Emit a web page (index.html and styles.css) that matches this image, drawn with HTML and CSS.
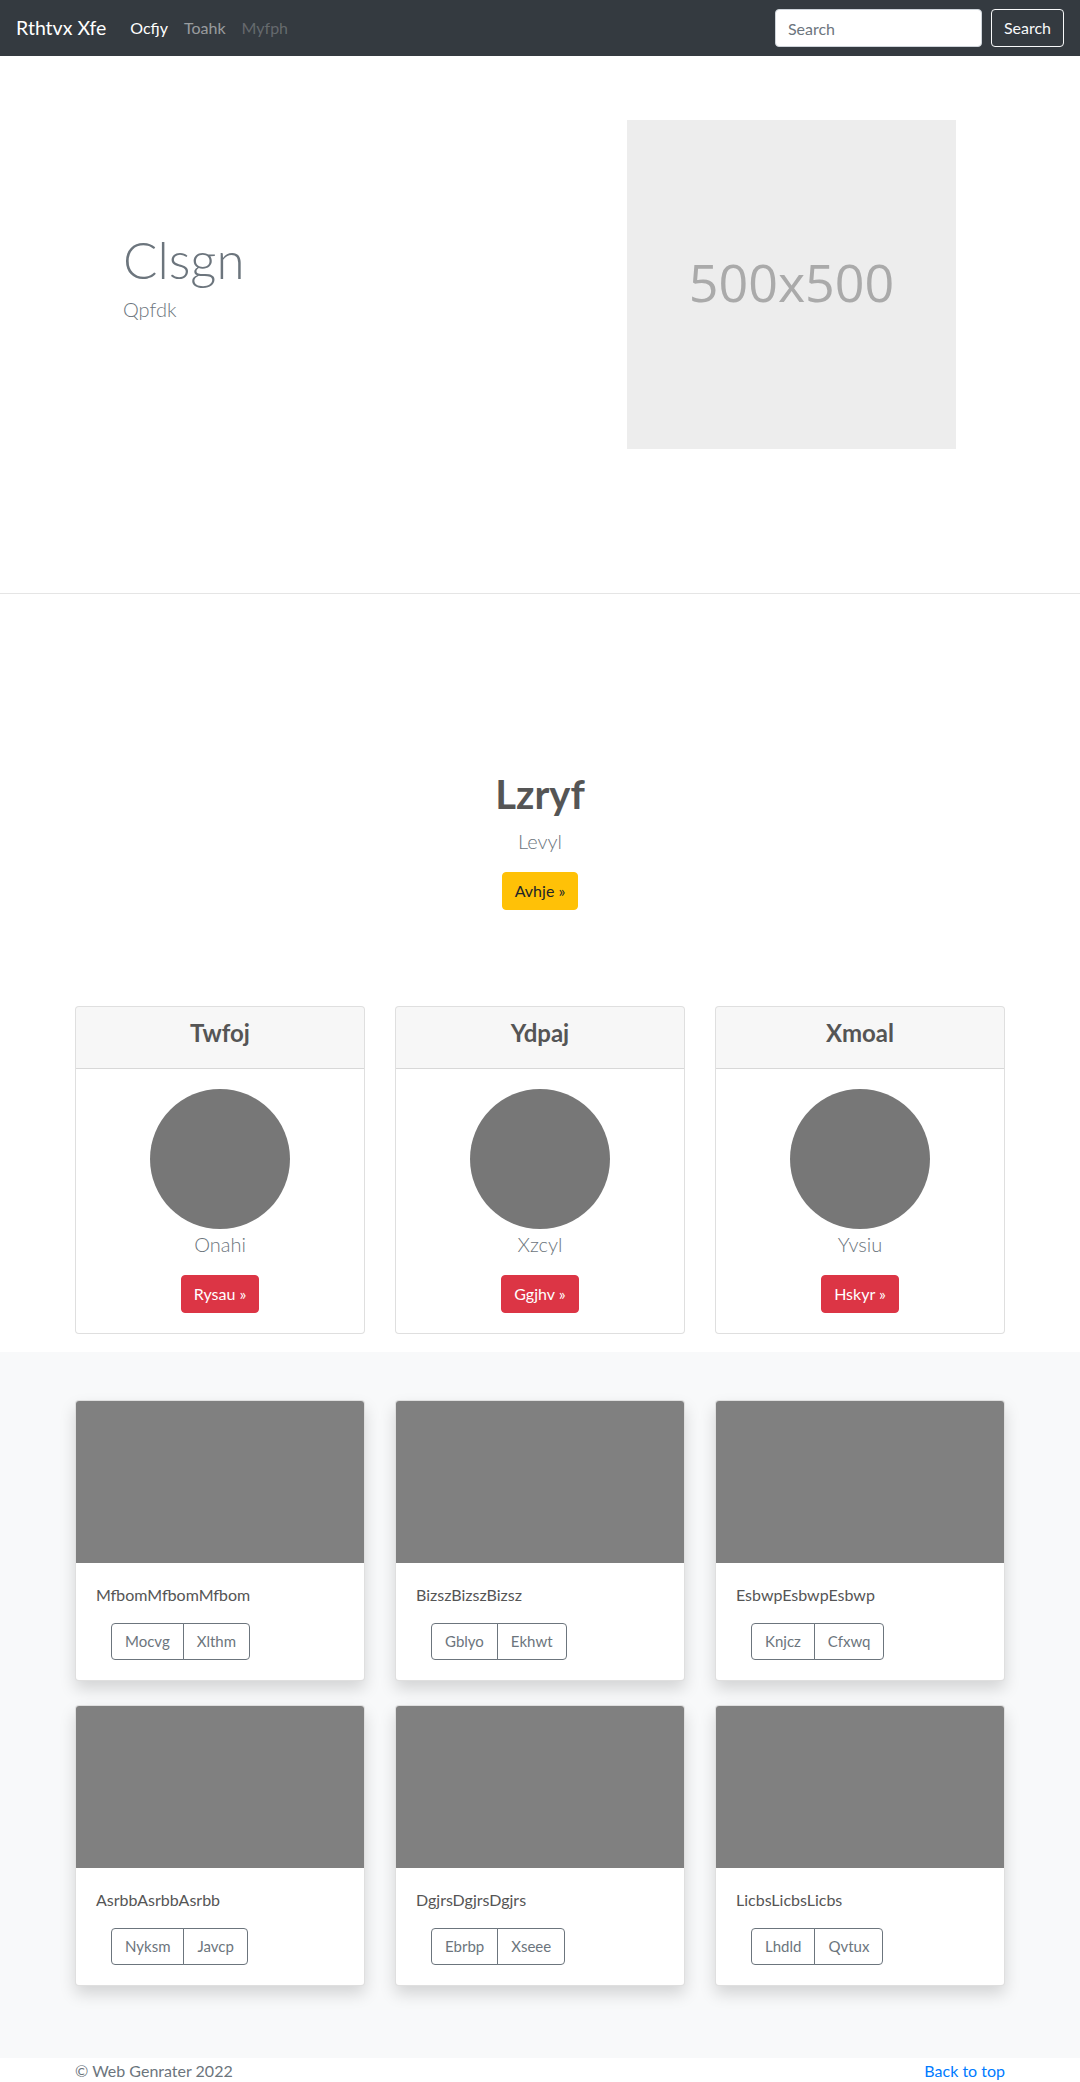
FILE: index.html
```html
<!DOCTYPE html>
<html lang="en">
<head>
<meta charset="utf-8">
<title>Rthtvx Xfe</title>
<link rel="stylesheet" href="styles.css">
</head>
<body>
<nav class="navbar">
  <a class="brand" href="#">Rthtvx Xfe</a>
  <ul class="nav">
    <li><a class="nav-link active" href="#">Ocfjy</a></li>
    <li><a class="nav-link" href="#">Toahk</a></li>
    <li><a class="nav-link disabled" href="#">Myfph</a></li>
  </ul>
  <form class="search">
    <input class="search-input" type="text" placeholder="Search">
    <button class="btn btn-outline-light" type="button">Search</button>
  </form>
</nav>

<section class="hero">
  <div class="container hero-row">
    <div class="hero-text">
      <h1 class="display">Clsgn</h1>
      <p class="lead muted">Qpfdk</p>
    </div>
    <div class="hero-media">
      <div class="placeholder">500x500</div>
    </div>
  </div>
</section>

<section class="feature">
  <div class="container">
    <div class="feature-intro">
      <h1 class="feature-title">Lzryf</h1>
      <p class="lead muted">Levyl</p>
      <a class="btn btn-warning" href="#">Avhje »</a>
    </div>
    <div class="grid-3">
      <div class="card">
        <div class="card-header"><h4>Twfoj</h4></div>
        <div class="card-body center">
          <svg class="avatar" width="140" height="140" viewBox="0 0 140 140"><circle cx="70" cy="70" r="70" fill="#777"/></svg>
          <p class="lead muted">Onahi</p>
          <a class="btn btn-danger" href="#">Rysau »</a>
        </div>
      </div>
      <div class="card">
        <div class="card-header"><h4>Ydpaj</h4></div>
        <div class="card-body center">
          <svg class="avatar" width="140" height="140" viewBox="0 0 140 140"><circle cx="70" cy="70" r="70" fill="#777"/></svg>
          <p class="lead muted">Xzcyl</p>
          <a class="btn btn-danger" href="#">Ggjhv »</a>
        </div>
      </div>
      <div class="card">
        <div class="card-header"><h4>Xmoal</h4></div>
        <div class="card-body center">
          <svg class="avatar" width="140" height="140" viewBox="0 0 140 140"><circle cx="70" cy="70" r="70" fill="#777"/></svg>
          <p class="lead muted">Yvsiu</p>
          <a class="btn btn-danger" href="#">Hskyr »</a>
        </div>
      </div>
    </div>
  </div>
</section>

<section class="album">
  <div class="container grid-3 album-grid">
    <div class="card shadow">
      <div class="thumb"></div>
      <div class="card-body">
        <p class="card-text">MfbomMfbomMfbom</p>
        <div class="btn-group"><a class="btn btn-sm btn-outline-secondary" href="#">Mocvg</a><a class="btn btn-sm btn-outline-secondary" href="#">Xlthm</a></div>
      </div>
    </div>
    <div class="card shadow">
      <div class="thumb"></div>
      <div class="card-body">
        <p class="card-text">BizszBizszBizsz</p>
        <div class="btn-group"><a class="btn btn-sm btn-outline-secondary" href="#">Gblyo</a><a class="btn btn-sm btn-outline-secondary" href="#">Ekhwt</a></div>
      </div>
    </div>
    <div class="card shadow">
      <div class="thumb"></div>
      <div class="card-body">
        <p class="card-text">EsbwpEsbwpEsbwp</p>
        <div class="btn-group"><a class="btn btn-sm btn-outline-secondary" href="#">Knjcz</a><a class="btn btn-sm btn-outline-secondary" href="#">Cfxwq</a></div>
      </div>
    </div>
    <div class="card shadow">
      <div class="thumb"></div>
      <div class="card-body">
        <p class="card-text">AsrbbAsrbbAsrbb</p>
        <div class="btn-group"><a class="btn btn-sm btn-outline-secondary" href="#">Nyksm</a><a class="btn btn-sm btn-outline-secondary" href="#">Javcp</a></div>
      </div>
    </div>
    <div class="card shadow">
      <div class="thumb"></div>
      <div class="card-body">
        <p class="card-text">DgjrsDgjrsDgjrs</p>
        <div class="btn-group"><a class="btn btn-sm btn-outline-secondary" href="#">Ebrbp</a><a class="btn btn-sm btn-outline-secondary" href="#">Xseee</a></div>
      </div>
    </div>
    <div class="card shadow">
      <div class="thumb"></div>
      <div class="card-body">
        <p class="card-text">LicbsLicbsLicbs</p>
        <div class="btn-group"><a class="btn btn-sm btn-outline-secondary" href="#">Lhdld</a><a class="btn btn-sm btn-outline-secondary" href="#">Qvtux</a></div>
      </div>
    </div>
  </div>
</section>

<footer class="footer">
  <div class="container footer-row">
    <p>© Web Genrater 2022</p>
    <p><a href="#">Back to top</a></p>
  </div>
</footer>
</body>
</html>
```

FILE: styles.css
```css
* { box-sizing: border-box; }
html, body { margin: 0; padding: 0; }
body {
  font-family: Lato, "Open Sans", sans-serif;
  font-size: 16px;
  line-height: 1.5;
  color: #212529;
  background: #fff;
}
a { text-decoration: none; }
h1, h4, p { margin: 0; }

.container { width: 930px; margin: 0 auto; }

/* navbar */
.navbar {
  display: flex;
  align-items: center;
  height: 56px;
  padding: 0 16px;
  background: #343a40;
}
.brand {
  color: #fff;
  font-size: 19.5px;
  line-height: 30px;
  padding: 5px 0;
  margin-right: 16px;
}
.nav { display: flex; list-style: none; margin: 0; padding: 0; flex: 1; }
.nav-link { display: block; padding: 8px 8px; color: rgba(255,255,255,.5); }
.nav-link.active { color: #fff; }
.nav-link.disabled { color: rgba(255,255,255,.25); }
.search { display: flex; align-items: center; gap: 9px; }
.search-input {
  width: 207px;
  height: 38px;
  padding: 6px 12px;
  font: inherit;
  color: #495057;
  border: 1px solid #ced4da;
  border-radius: 4px;
  background: #fff;
}
.search-input::placeholder { color: #6c757d; }

/* buttons */
.btn {
  display: inline-block;
  font-family: inherit;
  font-size: 16px;
  line-height: 24px;
  padding: 6px 12px;
  border: 1px solid transparent;
  border-radius: 4px;
  cursor: pointer;
}
.btn-outline-light { color: #f8f9fa; border-color: #f8f9fa; background: transparent; }
.btn-warning { color: #212529; background: #ffc107; border-color: #ffc107; }
.btn-danger { color: #fff; background: #dc3545; border-color: #dc3545; }
.btn-outline-secondary { color: #6c757d; border-color: #6c757d; background: transparent; }
.btn-sm { font-size: 15px; line-height: 23px; padding: 6px 13px; }

.muted { color: #6c757d; }
.lead { font-size: 20px; font-weight: 300; line-height: 30px; }
.center { text-align: center; }

/* hero */
.hero {
  padding: 64px 0 144px;
  border-bottom: 1px solid #e5e5e5;
}
.hero-row { display: flex; align-items: center; }
.hero-text { flex: 1; padding: 0 48px; }
.hero-text .lead { margin-bottom: 16px; }
.display {
  font-size: 51px;
  font-weight: 300;
  line-height: 1.2;
  color: #6c757d;
  margin-bottom: 3px;
}
.hero-media { flex: 1; display: flex; justify-content: flex-end; padding-right: 49px; }
.placeholder {
  width: 329px;
  height: 329px;
  padding-bottom: 6px;
  background: #ededed;
  color: #aaa;
  font-family: "Open Sans", sans-serif;
  font-size: 52px;
  display: flex;
  align-items: center;
  justify-content: center;
}

/* feature */
.feature { padding: 176px 0 18px; }
.feature-intro { text-align: center; margin-bottom: 96px; }
.feature-title {
  font-size: 40px;
  font-weight: 700;
  line-height: 48px;
  color: #555;
  margin-bottom: 8px;
}
.feature-intro .lead { margin-bottom: 16px; }

.grid-3 { display: grid; grid-template-columns: repeat(3, 290px); column-gap: 30px; }

.card {
  background: #fff;
  border: 1px solid rgba(0,0,0,.125);
  border-radius: 4px;
  overflow: hidden;
}
.card-header {
  background: rgba(0,0,0,.03);
  border-bottom: 1px solid rgba(0,0,0,.125);
  padding: 12px 20px;
  text-align: center;
}
.card-header h4 {
  font-size: 24px;
  font-weight: 700;
  line-height: 1.2;
  color: #555;
  margin-bottom: 8px;
}
.card-body { padding: 20px; }
.avatar { display: block; margin: 0 auto; }
.card-body .lead { margin-bottom: 16px; }

/* album */
.album { background: #f8f9fa; padding: 48px 0; }
.album-grid { row-gap: 24px; padding-bottom: 24px; }
.shadow { box-shadow: 0 8px 16px rgba(0,0,0,.15); }
.thumb { height: 162px; background: #808080; }
.card-text { font-size: 16px; line-height: 24px; color: #555; margin-bottom: 16px; }
.btn-group { display: inline-flex; margin-left: 15px; }
.btn-group .btn:first-child { border-top-right-radius: 0; border-bottom-right-radius: 0; }
.btn-group .btn:last-child { border-top-left-radius: 0; border-bottom-left-radius: 0; margin-left: -1px; }

/* footer */
.footer { color: #6c757d; padding-top: 1px; }
.footer-row { display: flex; justify-content: space-between; }
.footer a { color: #007bff; }
```
